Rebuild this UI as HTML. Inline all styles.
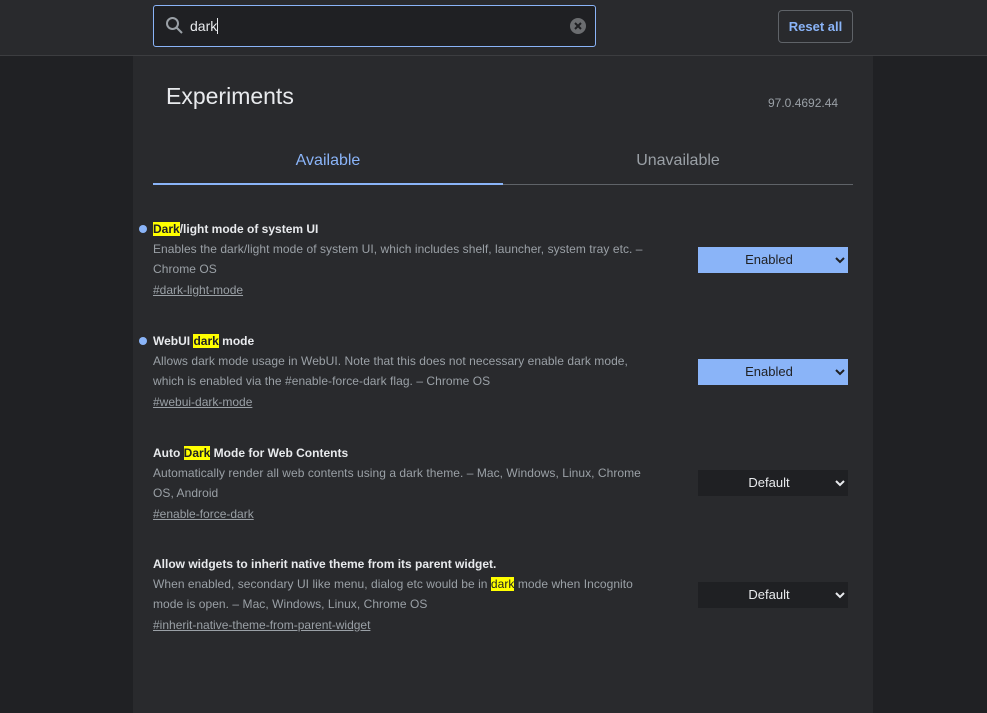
<!DOCTYPE html>
<html><head><meta charset="utf-8"><style>
*{box-sizing:border-box;margin:0;padding:0}
body{width:987px;height:713px;overflow:hidden;background:#202124;font-family:"Liberation Sans",Roboto,sans-serif;position:relative;color:#e8eaed}
.hdr{position:absolute;left:0;top:0;width:987px;height:56px;background:#292a2d;border-bottom:1px solid #3c3d40}
.search{position:absolute;left:153px;top:5px;width:443px;height:42px;background:#1f2023;border:1px solid #8ab4f8;border-radius:3px}
.search .t{position:absolute;left:36px;top:12px;font-size:14px;color:#e8eaed}
.search .t span{border-right:1px solid #e8eaed}
.reset{position:absolute;left:778px;top:10px;width:75px;height:33px;border:1px solid #5f6368;border-radius:4px;color:#8ab4f8;font-size:13px;font-weight:bold;text-align:center;line-height:31px}
.card{position:absolute;left:133px;top:56px;width:740px;height:657px;background:#292a2d}
h1{position:absolute;left:33px;top:27px;font-size:23px;font-weight:normal;color:#e8eaed}
.ver{position:absolute;left:635px;top:40px;font-size:12px;color:#9aa0a6}
.tab{position:absolute;top:96px;font-size:16px;width:350px;text-align:center}
.tabline{position:absolute;left:20px;top:128px;width:700px;height:1px;background:#5f6368}
.tabsel{position:absolute;left:20px;top:127px;width:350px;height:2px;background:#8ab4f8}
.exp{position:absolute;left:20px;width:700px}
.exp .title{font-size:12px;font-weight:bold;color:#e8eaed;height:18px;line-height:18px}
.exp .dot{position:absolute;left:-14px;top:5px;width:8px;height:8px;border-radius:50%;background:#8ab4f8}
.hl{background:#ffff00;color:#202124}
.exp .desc{font-size:12px;color:#9aa0a6;line-height:19.5px;width:500px;margin-top:2px;letter-spacing:0.05px}
.exp .link{font-size:12px;color:#9aa0a6;text-decoration:underline;margin-top:3px;line-height:16px}
.sel{position:absolute;left:565px;width:150px;height:26px;font-size:13px;text-align:center;line-height:26px;padding-right:8px}
.sel.en{background:#8ab4f8;color:#202124}
.sel.df{background:#1f2023;color:#e8eaed}
.sel svg{position:absolute;right:3px;top:9px}
</style></head><body>
<div class="hdr"></div>
<div class="search">
<svg style="position:absolute;left:11px;top:10px" width="20" height="20" viewBox="0 0 20 20"><circle cx="7.5" cy="7.5" r="5.5" fill="none" stroke="#9aa0a6" stroke-width="2"/><path d="M11.5 11.5 L17 17" stroke="#9aa0a6" stroke-width="2"/></svg>
<div class="t"><span>dark</span></div>
<svg style="position:absolute;right:8px;top:11px" width="18" height="18" viewBox="0 0 18 18"><circle cx="9" cy="9" r="8" fill="#6b6d70"/><path d="M6 6L12 12M12 6L6 12" stroke="#1f2023" stroke-width="2"/></svg>
</div>
<div class="reset">Reset all</div>
<div class="card">
<h1>Experiments</h1>
<div class="ver">97.0.4692.44</div>
<div class="tab" style="left:20px;color:#8ab4f8">Available</div>
<div class="tab" style="left:370px;color:#9aa0a6">Unavailable</div>
<div class="tabline"></div><div class="tabsel"></div>

<div class="exp" style="top:164px"><div class="dot"></div>
<div class="title"><span class="hl">Dark</span>/light mode of system UI</div>
<div class="desc">Enables the dark/light mode of system UI, which includes shelf, launcher, system tray etc. – Chrome OS</div>
<div class="link">#dark-light-mode</div></div>
<div class="sel en" style="top:191px">Enabled<svg width="10" height="8" viewBox="0 0 10 8"><path d="M1 2L5 6L9 2" fill="none" stroke="#202124" stroke-width="2"/></svg></div>

<div class="exp" style="top:276px"><div class="dot"></div>
<div class="title">WebUI <span class="hl">dark</span> mode</div>
<div class="desc">Allows dark mode usage in WebUI. Note that this does not necessary enable dark mode, which is enabled via the #enable-force-dark flag. – Chrome OS</div>
<div class="link">#webui-dark-mode</div></div>
<div class="sel en" style="top:303px">Enabled<svg width="10" height="8" viewBox="0 0 10 8"><path d="M1 2L5 6L9 2" fill="none" stroke="#202124" stroke-width="2"/></svg></div>

<div class="exp" style="top:388px">
<div class="title">Auto <span class="hl">Dark</span> Mode for Web Contents</div>
<div class="desc">Automatically render all web contents using a dark theme. – Mac, Windows, Linux, Chrome OS, Android</div>
<div class="link">#enable-force-dark</div></div>
<div class="sel df" style="top:414px">Default<svg width="10" height="8" viewBox="0 0 10 8"><path d="M1 2L5 6L9 2" fill="none" stroke="#e8eaed" stroke-width="2"/></svg></div>

<div class="exp" style="top:499px">
<div class="title">Allow widgets to inherit native theme from its parent widget.</div>
<div class="desc">When enabled, secondary UI like menu, dialog etc would be in <span class="hl">dark</span> mode when Incognito mode is open. – Mac, Windows, Linux, Chrome OS</div>
<div class="link">#inherit-native-theme-from-parent-widget</div></div>
<div class="sel df" style="top:526px">Default<svg width="10" height="8" viewBox="0 0 10 8"><path d="M1 2L5 6L9 2" fill="none" stroke="#e8eaed" stroke-width="2"/></svg></div>
</div>
</body></html>
